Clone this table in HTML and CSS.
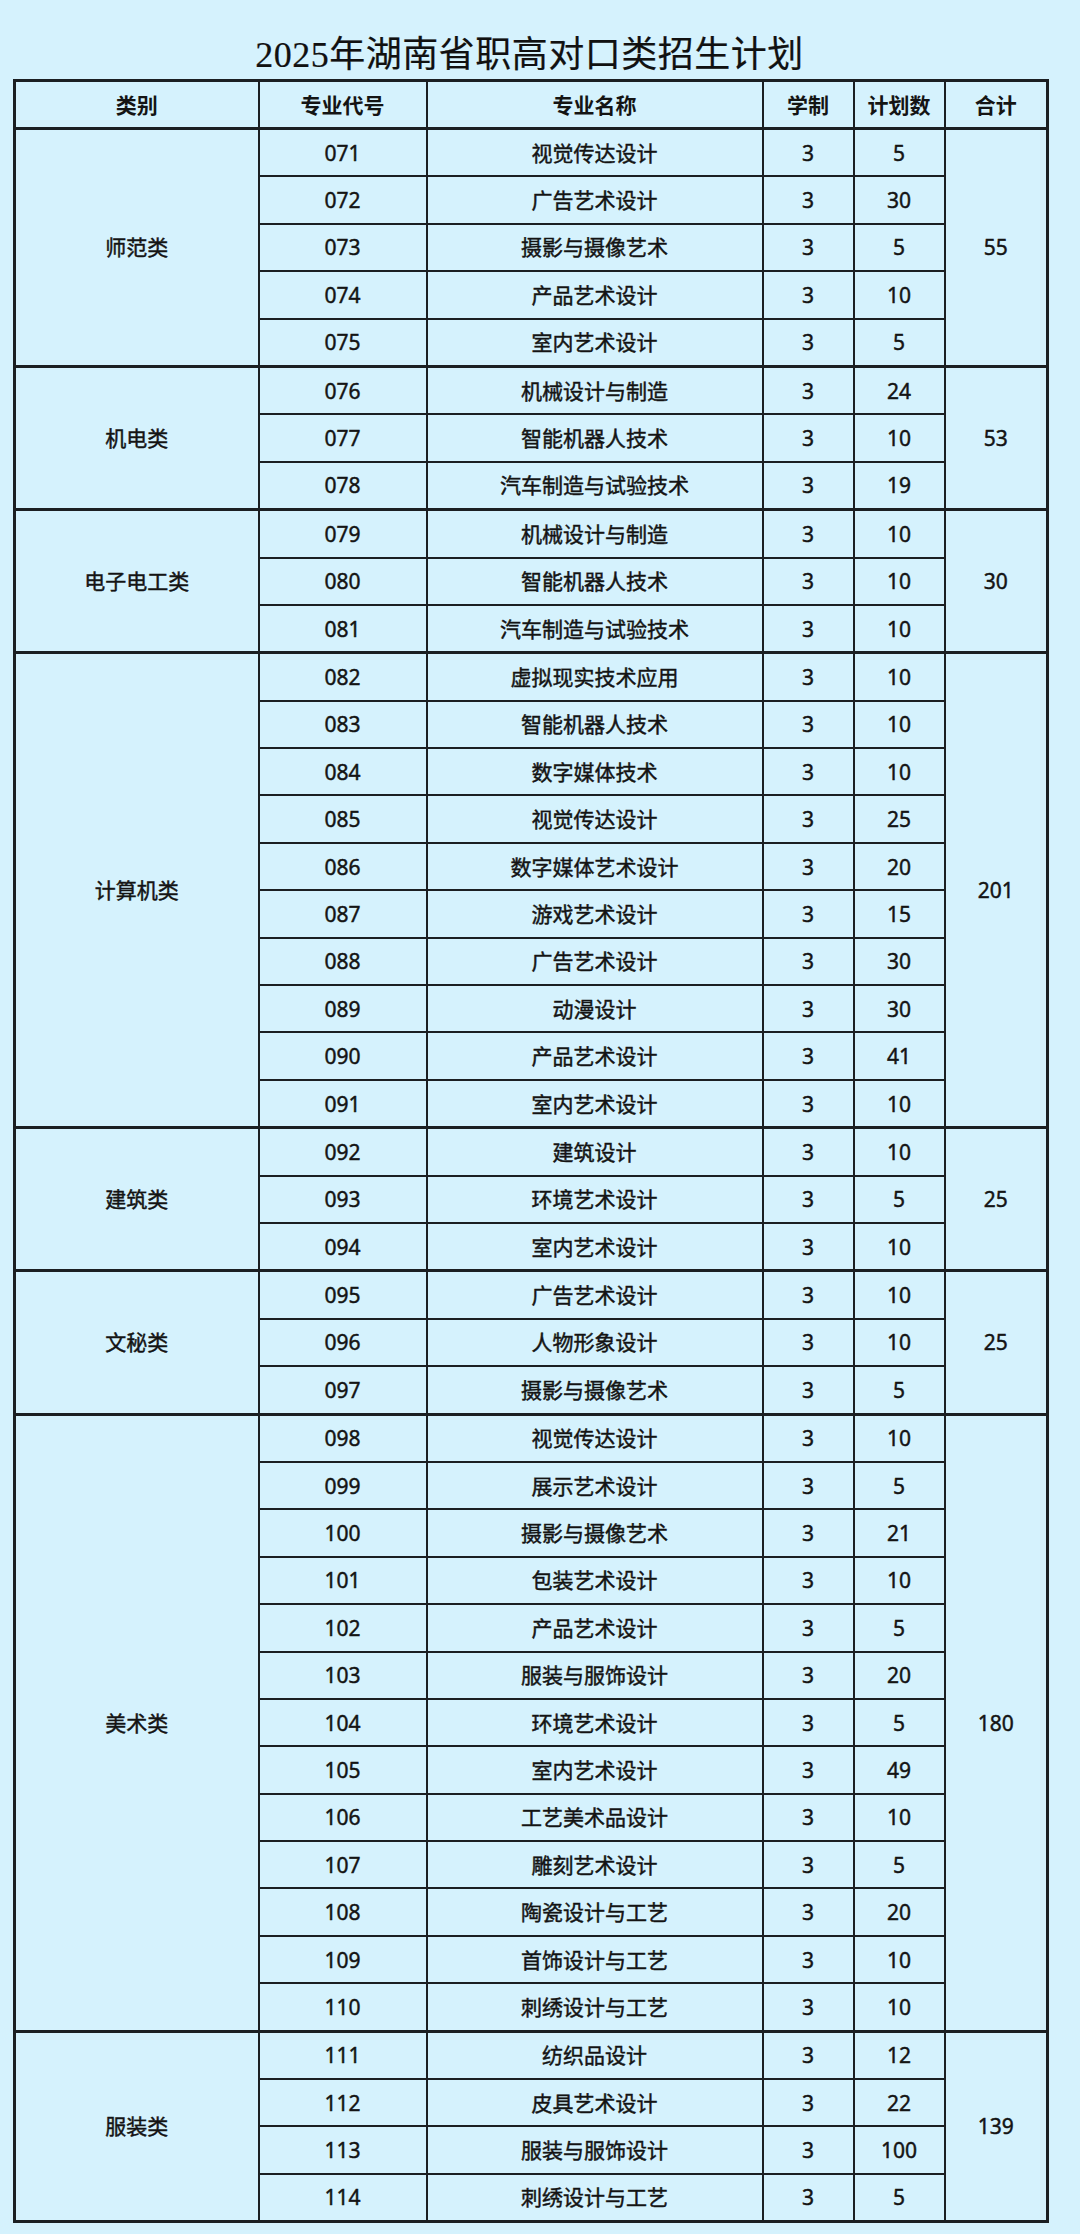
FILE: index.html
```html
<!DOCTYPE html>
<html lang="zh-CN">
<head>
<meta charset="utf-8">
<title>2025年湖南省职高对口类招生计划</title>
<link rel="stylesheet" href="styles.css">
</head>
<body>
<div class="page">
  <h1 class="title">2025年湖南省职高对口类招生计划</h1>
  <table class="plan">
    <colgroup>
      <col class="c-cat"><col class="c-code"><col class="c-name"><col class="c-len"><col class="c-num"><col class="c-sum">
    </colgroup>
    <thead>
      <tr><th>类别</th><th>专业代号</th><th>专业名称</th><th>学制</th><th>计划数</th><th>合计</th></tr>
    </thead>
    <tbody>
      <tr class="g"><td rowspan="5">师范类</td><td>071</td><td>视觉传达设计</td><td>3</td><td>5</td><td rowspan="5">55</td></tr>
      <tr><td>072</td><td>广告艺术设计</td><td>3</td><td>30</td></tr>
      <tr><td>073</td><td>摄影与摄像艺术</td><td>3</td><td>5</td></tr>
      <tr><td>074</td><td>产品艺术设计</td><td>3</td><td>10</td></tr>
      <tr><td>075</td><td>室内艺术设计</td><td>3</td><td>5</td></tr>

      <tr class="g"><td rowspan="3">机电类</td><td>076</td><td>机械设计与制造</td><td>3</td><td>24</td><td rowspan="3">53</td></tr>
      <tr><td>077</td><td>智能机器人技术</td><td>3</td><td>10</td></tr>
      <tr><td>078</td><td>汽车制造与试验技术</td><td>3</td><td>19</td></tr>

      <tr class="g"><td rowspan="3">电子电工类</td><td>079</td><td>机械设计与制造</td><td>3</td><td>10</td><td rowspan="3">30</td></tr>
      <tr><td>080</td><td>智能机器人技术</td><td>3</td><td>10</td></tr>
      <tr><td>081</td><td>汽车制造与试验技术</td><td>3</td><td>10</td></tr>

      <tr class="g"><td rowspan="10">计算机类</td><td>082</td><td>虚拟现实技术应用</td><td>3</td><td>10</td><td rowspan="10">201</td></tr>
      <tr><td>083</td><td>智能机器人技术</td><td>3</td><td>10</td></tr>
      <tr><td>084</td><td>数字媒体技术</td><td>3</td><td>10</td></tr>
      <tr><td>085</td><td>视觉传达设计</td><td>3</td><td>25</td></tr>
      <tr><td>086</td><td>数字媒体艺术设计</td><td>3</td><td>20</td></tr>
      <tr><td>087</td><td>游戏艺术设计</td><td>3</td><td>15</td></tr>
      <tr><td>088</td><td>广告艺术设计</td><td>3</td><td>30</td></tr>
      <tr><td>089</td><td>动漫设计</td><td>3</td><td>30</td></tr>
      <tr><td>090</td><td>产品艺术设计</td><td>3</td><td>41</td></tr>
      <tr><td>091</td><td>室内艺术设计</td><td>3</td><td>10</td></tr>

      <tr class="g"><td rowspan="3">建筑类</td><td>092</td><td>建筑设计</td><td>3</td><td>10</td><td rowspan="3">25</td></tr>
      <tr><td>093</td><td>环境艺术设计</td><td>3</td><td>5</td></tr>
      <tr><td>094</td><td>室内艺术设计</td><td>3</td><td>10</td></tr>

      <tr class="g"><td rowspan="3">文秘类</td><td>095</td><td>广告艺术设计</td><td>3</td><td>10</td><td rowspan="3">25</td></tr>
      <tr><td>096</td><td>人物形象设计</td><td>3</td><td>10</td></tr>
      <tr><td>097</td><td>摄影与摄像艺术</td><td>3</td><td>5</td></tr>

      <tr class="g"><td rowspan="13">美术类</td><td>098</td><td>视觉传达设计</td><td>3</td><td>10</td><td rowspan="13">180</td></tr>
      <tr><td>099</td><td>展示艺术设计</td><td>3</td><td>5</td></tr>
      <tr><td>100</td><td>摄影与摄像艺术</td><td>3</td><td>21</td></tr>
      <tr><td>101</td><td>包装艺术设计</td><td>3</td><td>10</td></tr>
      <tr><td>102</td><td>产品艺术设计</td><td>3</td><td>5</td></tr>
      <tr><td>103</td><td>服装与服饰设计</td><td>3</td><td>20</td></tr>
      <tr><td>104</td><td>环境艺术设计</td><td>3</td><td>5</td></tr>
      <tr><td>105</td><td>室内艺术设计</td><td>3</td><td>49</td></tr>
      <tr><td>106</td><td>工艺美术品设计</td><td>3</td><td>10</td></tr>
      <tr><td>107</td><td>雕刻艺术设计</td><td>3</td><td>5</td></tr>
      <tr><td>108</td><td>陶瓷设计与工艺</td><td>3</td><td>20</td></tr>
      <tr><td>109</td><td>首饰设计与工艺</td><td>3</td><td>10</td></tr>
      <tr><td>110</td><td>刺绣设计与工艺</td><td>3</td><td>10</td></tr>

      <tr class="g"><td rowspan="4">服装类</td><td>111</td><td>纺织品设计</td><td>3</td><td>12</td><td rowspan="4">139</td></tr>
      <tr><td>112</td><td>皮具艺术设计</td><td>3</td><td>22</td></tr>
      <tr><td>113</td><td>服装与服饰设计</td><td>3</td><td>100</td></tr>
      <tr><td>114</td><td>刺绣设计与工艺</td><td>3</td><td>5</td></tr>
    </tbody>
  </table>
</div>
</body>
</html>
```

FILE: styles.css
```css
html, body {
  margin: 0;
  padding: 0;
  background: #d5f2fd;
}

.page {
  width: 1033px;
  margin-left: 13px;
  padding-top: 37px;
}

.title {
  margin: 0 0 5px 0;
  font-family: "Liberation Serif", "Noto Sans CJK SC", serif;
  font-weight: 400;
  font-size: 36px;
  line-height: 37px;
  letter-spacing: 0.5px;
  text-align: center;
  color: #111;
  -webkit-text-stroke: 0.2px #111;
}

.plan {
  width: 1033px;
  border-collapse: collapse;
  table-layout: fixed;
  border: 3px solid #1b1f22;
  font-family: "Noto Sans", "Noto Sans CJK SC", sans-serif;
  font-size: 21px;
  font-weight: 400;
  color: #141414;
}

.c-cat { width: 244px; }
.c-code { width: 168px; }
.c-name { width: 336px; }
.c-len { width: 91px; }
.c-num { width: 91px; }
.c-sum { width: 103px; }

.plan th,
.plan td {
  border: 2px solid #1b1f22;
  padding: 0;
  text-align: center;
  vertical-align: middle;
  line-height: 24px;
}

.plan th {
  height: 45px;
  font-weight: 700;
  border-bottom-width: 3px;
}

.plan td {
  height: 45.4px;
  -webkit-text-stroke: 0.45px #141414;
}

.plan tr.g td {
  border-top-width: 3px;
}
```
